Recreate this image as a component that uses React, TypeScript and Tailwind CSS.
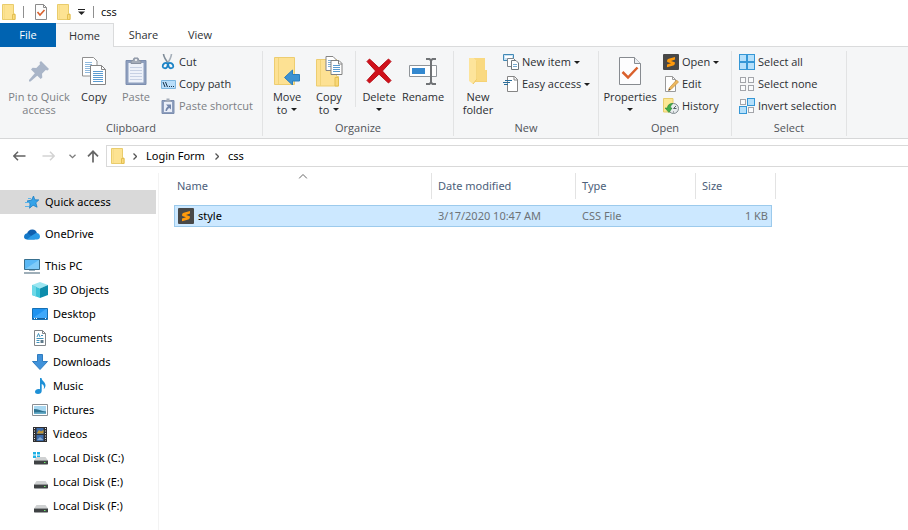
import React from 'react';
import clsx from 'clsx';

interface IconProps {
  w: number;
  h: number;
  children: React.ReactNode;
}

function Icon({ w, h, children }: IconProps) {
  return (
    <svg width={w} height={h} viewBox={`0 0 ${w} ${h}`} fill="none" className="shrink-0" aria-hidden="true">
      {children}
    </svg>
  );
}

const Caret = () => (
  <Icon w={6} h={3}><path d="M0 0h6L3 3z" fill="#1e1e1e" /></Icon>
);

const SmallFolder = () => (
  <Icon w={14} h={16}>
    <path d="M.5.5h11v9.500h1.500v5.500H.5z" fill="#fde392" stroke="#e9cc6c" />
    <path d="M2.500 1v14" stroke="#f7dc88" />
    <path d="M10.500 15.500v-5h2.500v5z" fill="#fbdc7c" stroke="#e3bf52" />
  </Icon>
);

const CheckDoc = () => (
  <Icon w={12} h={16}>
    <path d="M.5.5h8l3 3v12H.5z" fill="#fdfdfd" stroke="#8b8b8b" />
    <path d="M8.500.5v3h3" stroke="#8b8b8b" />
    <path d="M2.500 8l2.500 3 4.500-5" stroke="#d9602c" strokeWidth="1.600" />
  </Icon>
);

const Pin = () => (
  <Icon w={22} h={22}>
    <path d="M13 1l8 8-1.500 1.500-1.800-.4-3.700 3.700.3 3.700-1.600 1.600L3 9.400l1.600-1.600 3.700.3L12 4.300l-.5-1.800z" fill="#a9b5c8" />
    <path d="M7.500 12.500l2.500 2.500-7.500 6.500H1v-1.500z" fill="#a9b5c8" />
  </Icon>
);

const Copy = () => (
  <Icon w={24} h={28}>
    <path d="M.5.500h11l3.500 3.500v15H.5z" fill="#fff" stroke="#909090" />
    <path d="M3 5.500h7M3 7.500h7M3 9.500h5M3 11.500h5M3 13.500h5M3 15.500h5" stroke="#8fb9dd" />
    <path d="M8.500 8.500h11l4 4v15h-15z" fill="#fff" stroke="#858585" />
    <path d="M19.500 8.500v4h4" stroke="#858585" />
    <path d="M11 14.500h10M11 16.500h10M11 18.500h10M11 20.500h10M11 22.500h10M11 24.500h10" stroke="#5b9bd0" />
  </Icon>
);

const Paste = () => (
  <Icon w={22} h={28}>
    <path d="M1 3.500h20v24H1z" fill="#8e9fbe" stroke="#7c8eaf" />
    <path d="M3.500 6h15v19.500h-15z" fill="#eef2fa" />
    <path d="M5 10.500h12M5 13.500h12M5 16.500h12M5 19.500h12M5 22.500h12" stroke="#c7d1e4" />
    <path d="M6 6.500V4l2.500-1 .5-2h4l.5 2L16 4v2.500z" fill="#a4acb9" stroke="#8992a2" />
    <circle cx="11" cy="3" r="1" fill="#fff" />
  </Icon>
);

const Cut = () => (
  <Icon w={14} h={16}>
    <path d="M2.500 0c.2 3 2.500 6.500 5.500 10" stroke="#7f8c98" strokeWidth="1.600" />
    <path d="M10.500 0c-.2 3-2 6.500-4.500 10" stroke="#a6b0ba" strokeWidth="1.600" />
    <path d="M6.500 9.500c-2-1.500-5 .2-4.800 3 .2 2 3.500 2.500 4.500.3.500-1.100.8-2 .3-3.300z" stroke="#1b83c6" strokeWidth="1.800" />
    <path d="M7.300 9.500c2-1.500 5.200.2 5 3-.2 2-3.500 2.500-4.500.3-.5-1.100-.8-2-.5-3.300z" stroke="#1b83c6" strokeWidth="1.800" />
  </Icon>
);

const CopyPath = () => (
  <Icon w={15} h={9}>
    <path d="M.5.500h14v8H.5z" fill="#b9defa" stroke="#7db6df" />
    <path d="M2 2l2 5M4.500 2l2 5" stroke="#17324a" />
    <path d="M8 6.500h1M10 6.500h1M12 6.500h1" stroke="#17324a" />
  </Icon>
);

const PasteShortcut = () => (
  <Icon w={14} h={16}>
    <path d="M1 2.500h12v13H1z" fill="#8e9fbe" stroke="#7c8eaf" />
    <path d="M3 4h8v10H3z" fill="#e9eef8" />
    <path d="M4 4V2.500h1.500V.5h3v2H10V4z" fill="#a4acb9" />
    <path d="M5 6.500h5v5L8.400 9.900C7 10.500 6.300 11.500 6 13H4.500c0-2.300 1-3.800 2.400-4.600z" fill="#7487ab" />
  </Icon>
);

const MoveTo = () => (
  <Icon w={26} h={28}>
    <path d="M.5.500h20v27H.5z" fill="#fde193" stroke="#edcd70" />
    <path d="M4.500 1v26" stroke="#f1d378" />
    <path d="M10.500 20.500l8-7.500v4.500h7v6.500h-7v4z" fill="#3d92d2" stroke="#2c7ebd" />
  </Icon>
);

const CopyTo = () => (
  <Icon w={27} h={31}>
    <path d="M.5 3.500h20v17h2v9.500H.5z" fill="#fde193" stroke="#edcd70" />
    <path d="M4.500 4v26" stroke="#f1d378" />
    <path d="M19 21.500h3.500V30H19z" fill="#f9d778" stroke="#e3bf52" />
    <path d="M10 .5h7l3 3v11H10z" fill="#fff" stroke="#858585" />
    <path d="M12 4.500h5M12 6.500h3M12 8.500h3M12 10.500h3" stroke="#7eafd8" />
    <path d="M15 4.500h8l3 3v11H15z" fill="#fff" stroke="#808080" />
    <path d="M22.500 4.500v3.500H26" stroke="#808080" />
    <path d="M17 9.500h7M17 11.500h7M17 13.500h7M17 15.500h7" stroke="#5b9bd0" />
  </Icon>
);

const Delete = () => (
  <Icon w={26} h={26}>
    <path d="M3.500 1L13 9.800 22.500 1 25 3.500 16.400 13l8.600 9.500-2.500 2.500L13 16.200 3.500 25 1 22.500 9.600 13 1 3.500z" fill="#d0111b" stroke="#b80d16" />
  </Icon>
);

const Rename = () => (
  <Icon w={28} h={27}>
    <path d="M.5 7.500h27v11H.5z" fill="#fff" stroke="#8f9499" />
    <path d="M3 10h13v6H3z" fill="#3488cf" />
    <path d="M17 1h3.500l1.500 1.500L23.500 1H27M22 2.500v22M17 26h3.500l1.500-1.500 1.500 1.500H27" stroke="#707376" strokeWidth="2" />
  </Icon>
);

const NewFolder = () => (
  <Icon w={20} h={28}>
    <path d="M1 1h16v12h2v12H6z" fill="#f6d274" />
    <path d="M1 1h5l3 3v18l-4 5-4-3z" fill="#fde49b" />
    <path d="M9 4v18l-4 5" stroke="#edc861" />
    <path d="M6 1h11v12h1.500v11H8l1-2V4z" fill="#f9d981" />
  </Icon>
);

const NewItem = () => (
  <Icon w={16} h={16}>
    <path d="M.5.500h10v6H.5z" fill="#c7e2f5" stroke="#4389b5" />
    <path d="M2 3h7" stroke="#fff" strokeWidth="2" />
    <path d="M4.500 4.500h6l2 2v6h-8z" fill="#fff" stroke="#7e858b" />
    <path d="M8.500 6.500h4.500l2.500 2.500v6.500h-7z" fill="#fff" stroke="#6f777d" />
    <path d="M10 10.500h4M10 12.500h4" stroke="#75a9cf" />
  </Icon>
);

const EasyAccess = () => (
  <Icon w={16} h={16}>
    <path d="M4.500.5h7l3 3v12h-10z" fill="#fff" stroke="#858585" />
    <path d="M11 .5v3.500h4" stroke="#858585" />
    <path d="M2 4.500h7M0 6.500h7M1 8.500h4" stroke="#2c6f9b" />
  </Icon>
);

const Properties = () => (
  <Icon w={22} h={28}>
    <path d="M.5.500h15l6 6v21H.5z" fill="#fdfdfe" stroke="#878b90" />
    <path d="M15.500.5v6h6" fill="#e9edf1" stroke="#878b90" />
    <path d="M3.500 15l5.500 5.500 9.500-10" stroke="#d9602c" strokeWidth="2.500" />
  </Icon>
);

const Sublime = () => (
  <Icon w={16} h={16}>
    <rect width="16" height="16" rx="1" fill="#484848" />
    <path d="M12 3v2.600L8 6.900l3.800 1.300c.3 1.800-.1 2.600-1.500 3.200L4 13.200v-2.600l4-1.400-3.800-1.300c-.3-1.700.1-2.600 1.500-3.100z" fill="#ff9a0c" />
  </Icon>
);

const Edit = () => (
  <Icon w={15} h={16}>
    <path d="M1.500.5h7l3 3v12h-10z" fill="#fff" stroke="#9a9a9a" />
    <path d="M8.500.5v3h3" stroke="#9a9a9a" />
    <path d="M12.500 4l2 2-7.500 7.500-2.500 1 .8-2.600z" fill="#edb85e" stroke="#c78f3e" strokeWidth=".7" />
    <path d="M4.500 14.500l.7-2 1.300 1.300z" fill="#444" />
  </Icon>
);

const History = () => (
  <Icon w={16} h={16}>
    <path d="M.5.500h9.500v13.500H.5z" fill="#fde794" stroke="#e8cd6b" />
    <circle cx="10.500" cy="10.500" r="5" fill="#e7ebed" stroke="#7f8a90" />
    <path d="M10.500 10.500l2.500-2.500M10.500 10.500h3M7.500 10.500h1M10.500 13.500v1" stroke="#566067" />
    <path d="M9.500 5.500C6 5.500 4.500 7.500 4.500 10H2l4 4.500L9 10H7.500c0-2 .5-3 2-4z" fill="#45ad45" stroke="#27883b" strokeWidth=".6" />
  </Icon>
);

// four cells of the "select" icons, on = highlighted
function Cells({ on }: { on: boolean[] }) {
  const spots = [[0, 0], [8, 0], [0, 8], [8, 8]];
  return (
    <Icon w={16} h={16}>
      {spots.map(([x, y], i) =>
        on[i]
          ? <rect key={i} x={x + 0.5} y={y + 0.5} width={7} height={7} fill="#b5e0fb" stroke="#3597d6" />
          : <rect key={i} x={x + 1.5} y={y + 1.5} width={5} height={5} fill="#fafbfc" stroke="#a3a5aa" />
      )}
    </Icon>
  );
}

const Star = () => (
  <Icon w={14} h={14}>
    <path d="M8.500 1l1.300 3.800 4 .1-3 2.900 1.300 4.400-4-2-3.600 3 .6-4.600L2 6l4.600-.9z" fill="#36a3e8" stroke="#197dc4" strokeWidth=".8" />
    <path d="M3 3.500h3M0 7.500h4M0 11.500h4" stroke="#5ab4ea" />
  </Icon>
);

const Cloud = () => (
  <Icon w={16} h={11}>
    <path d="M3 5C3.500 2 6 .3 8.500.5c2.200.2 4 1.500 4.500 3.700L8 8z" fill="#0f5fae" />
    <path d="M0 8c0-2.500 1.800-4 4-3.700L11 10.500H3C1.300 10.500 0 9.500 0 8z" fill="#1478c8" />
    <path d="M7 7l5-3c2.500-.2 4 1.500 4 3.500s-1.300 3-3 3H3z" fill="#2a9ae6" />
  </Icon>
);

const Monitor = () => (
  <Icon w={16} h={15}>
    <path d="M.5.500h15v10H.5z" fill="#5ab8f5" stroke="#38708f" />
    <path d="M1 10L15 1v9z" fill="#7fcbf8" />
    <path d="M5 11.500h6" stroke="#9fb3c0" />
    <path d="M0 14h16" stroke="#7e93a0" strokeWidth="1.500" />
  </Icon>
);

const Cube = () => (
  <Icon w={16} h={16}>
    <path d="M8 0l8 3-8 3.500L0 3z" fill="#9ce6f1" />
    <path d="M0 3l8 3.500V16l-8-3z" fill="#3cc3d8" />
    <path d="M16 3L8 6.500V16l8-3z" fill="#0c8cab" />
    <path d="M0 3l4 1.700v9.800L0 13z" fill="#6dd8e7" />
  </Icon>
);

const DesktopIcon = () => (
  <Icon w={16} h={12}>
    <path d="M.5.500h15v11H.5z" fill="#1f93f0" stroke="#1670b4" />
    <path d="M1 10L14 1h1v9z" fill="#3ea8fa" />
    <path d="M1 10.500h14" stroke="#155f9b" />
    <path d="M2 10.500h1M4 10.500h1M13 10.500h1" stroke="#fff" />
  </Icon>
);

const Document = () => (
  <Icon w={12} h={16}>
    <path d="M.5.500h8l3 3v12H.5z" fill="#fff" stroke="#818589" />
    <path d="M8.500.5v3h3" stroke="#818589" />
    <path d="M3 7l1.500-3.500L6 7M7 5.500h2M2.500 8.500h7M2.500 10.500h3M2.500 12.500h3" stroke="#3f91bb" />
    <path d="M6.500 10h3v3h-3z" fill="#5f7a8b" />
  </Icon>
);

const Download = () => (
  <Icon w={16} h={16}>
    <path d="M5.500.5h5v7h5L8 15.500.5 7.500h5z" fill="#4092da" stroke="#2f7cc0" />
  </Icon>
);

const Music = () => (
  <Icon w={11} h={16}>
    <path d="M5 0h1.500c.3 3 4 4 4 7.300 0 1.700-.8 3-1.800 4 .8-2.800.2-4.300-2-5.300V13c0 1.800-1.600 3-3.700 3C1.200 16 0 15.200 0 13.800c0-2 2.500-3.300 5-2.600z" fill="#1e90d6" />
  </Icon>
);

const Picture = () => (
  <Icon w={16} h={12}>
    <path d="M.5.500h15v11H.5z" fill="#fff" stroke="#8a8f94" />
    <path d="M2 2h12v8H2z" fill="#a9d8f1" />
    <path d="M2 5c4 0 7 2 12 2.500V10H2z" fill="#2f7391" />
    <path d="M2 8.500c4-.5 8-.5 12 0V10H2z" fill="#68adc9" />
  </Icon>
);

const Video = () => (
  <Icon w={14} h={15}>
    <path d="M0 0h14v15H0z" fill="#2e2e30" />
    <path d="M3.500 1h7v6h-7zM3.500 8h7v6h-7z" fill="#3d6cab" />
    <path d="M4 6l2-3 2 1.500L10.500 3v3.500H4z" fill="#c4952f" />
    <path d="M4 13l3-3 3.500 3z" fill="#85a9d1" />
    <path d="M1.500 1v13M12.500 1v13" stroke="#e8e8e8" strokeDasharray="1 1.500" />
  </Icon>
);

function Disk({ system = false }: { system?: boolean }) {
  return (
    <Icon w={15} h={13}>
      {system && <path d="M0 0h3v2.500H0zM4 0h3v2.500H4zM0 3.500h3V6H0zM4 3.500h3V6H4z" fill="#1fb0e4" />}
      <path d="M3.500 5h9L15 8.500H1z" fill="#cfd1d2" />
      <path d="M1 8.500h14V12l-.5.500h-13L1 12z" fill="#3f4244" />
      <path d="M11 10.500h1.500" stroke="#6df06a" strokeWidth="1.200" />
    </Icon>
  );
}

interface BigButtonProps {
  icon: React.ReactNode;
  lines: string[];
  caret?: boolean;
  disabled?: boolean;
  className: string;
}

function BigButton({ icon, lines, caret, disabled, className }: BigButtonProps) {
  const last = lines.length - 1;
  return (
    <button
      disabled={disabled}
      className={clsx('flex flex-col items-center whitespace-nowrap leading-[13px]', disabled && 'text-[#7c8085]', className)}
    >
      <span className="mt-1 mb-[3px] flex h-8 items-center justify-center">{icon}</span>
      {lines.map((line, i) => (
        <span key={line} className="flex items-center gap-1">
          {line}
          {caret && i === last && last > 0 && <Caret />}
        </span>
      ))}
      {caret && last === 0 && <span className="flex h-3 items-center"><Caret /></span>}
    </button>
  );
}

interface SmallButtonProps {
  icon: React.ReactNode;
  label: string;
  caret?: boolean;
  disabled?: boolean;
}

function SmallButton({ icon, label, caret, disabled }: SmallButtonProps) {
  return (
    <button
      disabled={disabled}
      className={clsx('flex h-[22px] items-center gap-[3px] whitespace-nowrap', disabled && 'text-[#7c8085]')}
    >
      <span className="flex w-4 justify-center">{icon}</span>
      <span>{label}</span>
      {caret && <Caret />}
    </button>
  );
}

function Group({ title, className, children }: { title: string; className: string; children: React.ReactNode }) {
  return (
    <section className={clsx('mt-1 mb-[2px] flex shrink-0 flex-col border-r border-[#e2e3e4]', className)}>
      <div className="flex h-[70px]">{children}</div>
      <h2 className="text-center leading-4 text-[#505357]">{title}</h2>
    </section>
  );
}

const places = [
  { label: 'Quick access', icon: <Star />, active: true },
  { label: 'OneDrive', icon: <Cloud /> },
  { label: 'This PC', icon: <Monitor /> },
];

const folders = [
  { label: '3D Objects', icon: <Cube /> },
  { label: 'Desktop', icon: <DesktopIcon /> },
  { label: 'Documents', icon: <Document /> },
  { label: 'Downloads', icon: <Download /> },
  { label: 'Music', icon: <Music /> },
  { label: 'Pictures', icon: <Picture /> },
  { label: 'Videos', icon: <Video /> },
  { label: 'Local Disk (C:)', icon: <Disk system /> },
  { label: 'Local Disk (E:)', icon: <Disk /> },
  { label: 'Local Disk (F:)', icon: <Disk /> },
];

function TitleBar() {
  return (
    <header className="flex h-[23px] items-center pl-[2px]">
      <SmallFolder />
      <span className="ml-[7px] h-3 w-px bg-[#8f8f8f]" />
      <button aria-label="Properties" className="ml-[11px]"><CheckDoc /></button>
      <button aria-label="New folder" className="ml-[10px]"><SmallFolder /></button>
      <button aria-label="Customize toolbar" className="ml-[7px]">
        <Icon w={7} h={6}><path d="M0 .5h7" stroke="#222" /><path d="M0 2.500h7L3.500 6z" fill="#222" /></Icon>
      </button>
      <span className="ml-2 h-3 w-px bg-[#8f8f8f]" />
      <h1 className="ml-[7px] text-black">css</h1>
    </header>
  );
}

function Ribbon() {
  return (
    <>
      <nav className="flex h-6 text-[#2f3235]">
        <button className="w-14 bg-[#0063b1] text-white">File</button>
        <button className="w-[58px] border-t border-r border-[#dadbdc] bg-[#f5f6f7]">Home</button>
        <div className="flex flex-1 border-b border-[#dadbdc]">
          <button className="w-[59px]">Share</button>
          <button className="w-[54px]">View</button>
        </div>
      </nav>
      <div className="flex h-[92px] overflow-hidden border-b border-[#d6d7d8] bg-[#f5f6f7] text-[#2b2e32]">
        <Group title="Clipboard" className="w-[263px] *:first:pl-1">
          <BigButton icon={<Pin />} lines={['Pin to Quick', 'access']} disabled className="w-[70px]" />
          <BigButton icon={<Copy />} lines={['Copy']} className="w-10" />
          <BigButton icon={<Paste />} lines={['Paste']} disabled className="w-11" />
          <div className="ml-[2px]">
            <SmallButton icon={<Cut />} label="Cut" />
            <SmallButton icon={<CopyPath />} label="Copy path" />
            <SmallButton icon={<PasteShortcut />} label="Paste shortcut" disabled />
          </div>
        </Group>
        <Group title="Organize" className="w-[191px]">
          <BigButton icon={<MoveTo />} lines={['Move', 'to']} caret className="w-12" />
          <BigButton icon={<CopyTo />} lines={['Copy', 'to']} caret className="w-9" />
          <span className="mr-px ml-2 h-14 w-px bg-[#e2e3e4]" />
          <BigButton icon={<Delete />} lines={['Delete']} caret className="w-11" />
          <BigButton icon={<Rename />} lines={['Rename']} className="w-11" />
        </Group>
        <Group title="New" className="w-[145px]">
          <BigButton icon={<NewFolder />} lines={['New', 'folder']} className="w-12" />
          <div className="ml-px">
            <SmallButton icon={<NewItem />} label="New item" caret />
            <SmallButton icon={<EasyAccess />} label="Easy access" caret />
          </div>
        </Group>
        <Group title="Open" className="w-[133px]">
          <BigButton icon={<Properties />} lines={['Properties']} caret className="w-[62px]" />
          <div className="ml-[2px]">
            <SmallButton icon={<Sublime />} label="Open" caret />
            <SmallButton icon={<Edit />} label="Edit" />
            <SmallButton icon={<History />} label="History" />
          </div>
        </Group>
        <Group title="Select" className="w-[115px]">
          <div className="ml-[7px]">
            <SmallButton icon={<Cells on={[true, true, true, true]} />} label="Select all" />
            <SmallButton icon={<Cells on={[false, false, false, false]} />} label="Select none" />
            <SmallButton icon={<Cells on={[false, true, true, false]} />} label="Invert selection" />
          </div>
        </Group>
      </div>
    </>
  );
}

const Chevron = () => (
  <Icon w={4} h={7}><path d="M.5.500l3 3-3 3" stroke="#555" strokeWidth="1.300" /></Icon>
);

function AddressBar() {
  return (
    <div className="flex h-[34px] items-center pl-[13px]">
      <button aria-label="Back">
        <Icon w={13} h={10}><path d="M12.500 5H1M5 .7L.8 5 5 9.300" stroke="#626262" strokeWidth="1.500" /></Icon>
      </button>
      <button aria-label="Forward" className="ml-4" disabled>
        <Icon w={13} h={10}><path d="M.5 5H12M8 .7L12.200 5 8 9.300" stroke="#d3d3d3" strokeWidth="1.500" /></Icon>
      </button>
      <button aria-label="Recent locations" className="ml-[14px]">
        <Icon w={7} h={5}><path d="M.5.700l3 3 3-3" stroke="#7c7c7c" strokeWidth="1.300" /></Icon>
      </button>
      <button aria-label="Up" className="ml-[11px]">
        <Icon w={12} h={13}><path d="M6 12.500V1.500M1 6.300l5-5 5 5" stroke="#666" strokeWidth="1.700" /></Icon>
      </button>
      <div className="ml-[7px] flex h-[22px] flex-1 items-center border border-r-0 border-[#d9d9d9] pl-1 text-black">
        <SmallFolder />
        <span className="ml-2"><Chevron /></span>
        <button className="ml-[9px]">Login Form</button>
        <span className="ml-[10px]"><Chevron /></span>
        <button className="ml-[9px]">css</button>
      </div>
    </div>
  );
}

function Sidebar() {
  return (
    <aside className="w-[159px] shrink-0 border-r border-[#f3f3f3] pt-[17px] pb-3 text-black">
      <ul className="flex flex-col gap-2">
        {places.map((place) => (
          <li key={place.label}>
            <a
              href="#"
              className={clsx('mr-[2px] flex h-6 items-center gap-[5px] pl-6', place.active && 'bg-[#d9d9d9]')}
            >
              <span className="flex w-4 justify-center">{place.icon}</span>
              {place.label}
            </a>
          </li>
        ))}
      </ul>
      <ul>
        {folders.map((folder) => (
          <li key={folder.label}>
            <a href="#" className="flex h-6 items-center gap-[5px] pl-8">
              <span className="flex w-4 justify-center">{folder.icon}</span>
              {folder.label}
            </a>
          </li>
        ))}
      </ul>
    </aside>
  );
}

function FileList() {
  return (
    <main className="min-w-0 flex-1 pl-[15px]">
      <table className="w-[602px] table-fixed border-separate border-spacing-0 text-left">
        <colgroup>
          <col className="w-[258px]" />
          <col className="w-[144px]" />
          <col className="w-[120px]" />
          <col className="w-[76px]" />
          <col className="w-1" />
        </colgroup>
        <thead className="text-[#4c607a] [&_th]:h-[26px] [&_th]:border-r [&_th]:border-[#e3e3e3] [&_th]:font-normal">
          <tr>
            <th className="relative pl-[3px]">
              Name
              <span className="absolute top-px left-1/2 -translate-x-1/2">
                <Icon w={9} h={5}><path d="M.5 4.500l4-4 4 4" stroke="#666" /></Icon>
              </span>
            </th>
            <th className="pl-[6px]">Date modified</th>
            <th className="pl-[6px]">Type</th>
            <th colSpan={2} className="pl-[6px]">Size</th>
          </tr>
        </thead>
        <tbody>
          <tr><td colSpan={5} className="h-[6px]" /></tr>
          <tr className="text-[#6d7378] [&>.sel]:h-[22px] [&>.sel]:border-y [&>.sel]:border-[#9ccaec] [&>.sel]:bg-[#cce8ff]">
            <td className="sel border-l pl-[3px] text-black">
              <span className="flex items-center gap-1"><Sublime />style</span>
            </td>
            <td className="sel pl-[6px]">3/17/2020 10:47 AM</td>
            <td className="sel pl-[6px]">CSS File</td>
            <td className="sel border-r pr-[3px] text-right">1 KB</td>
            <td />
          </tr>
        </tbody>
      </table>
    </main>
  );
}

export default function App() {
  return (
    <div className="min-h-screen bg-white font-['Open_Sans','Noto_Sans',sans-serif] text-[11px] leading-4">
      <TitleBar />
      <Ribbon />
      <div className="font-['Noto_Sans','Open_Sans',sans-serif]">
        <AddressBar />
        <div className="flex">
          <Sidebar />
          <FileList />
        </div>
      </div>
    </div>
  );
}
